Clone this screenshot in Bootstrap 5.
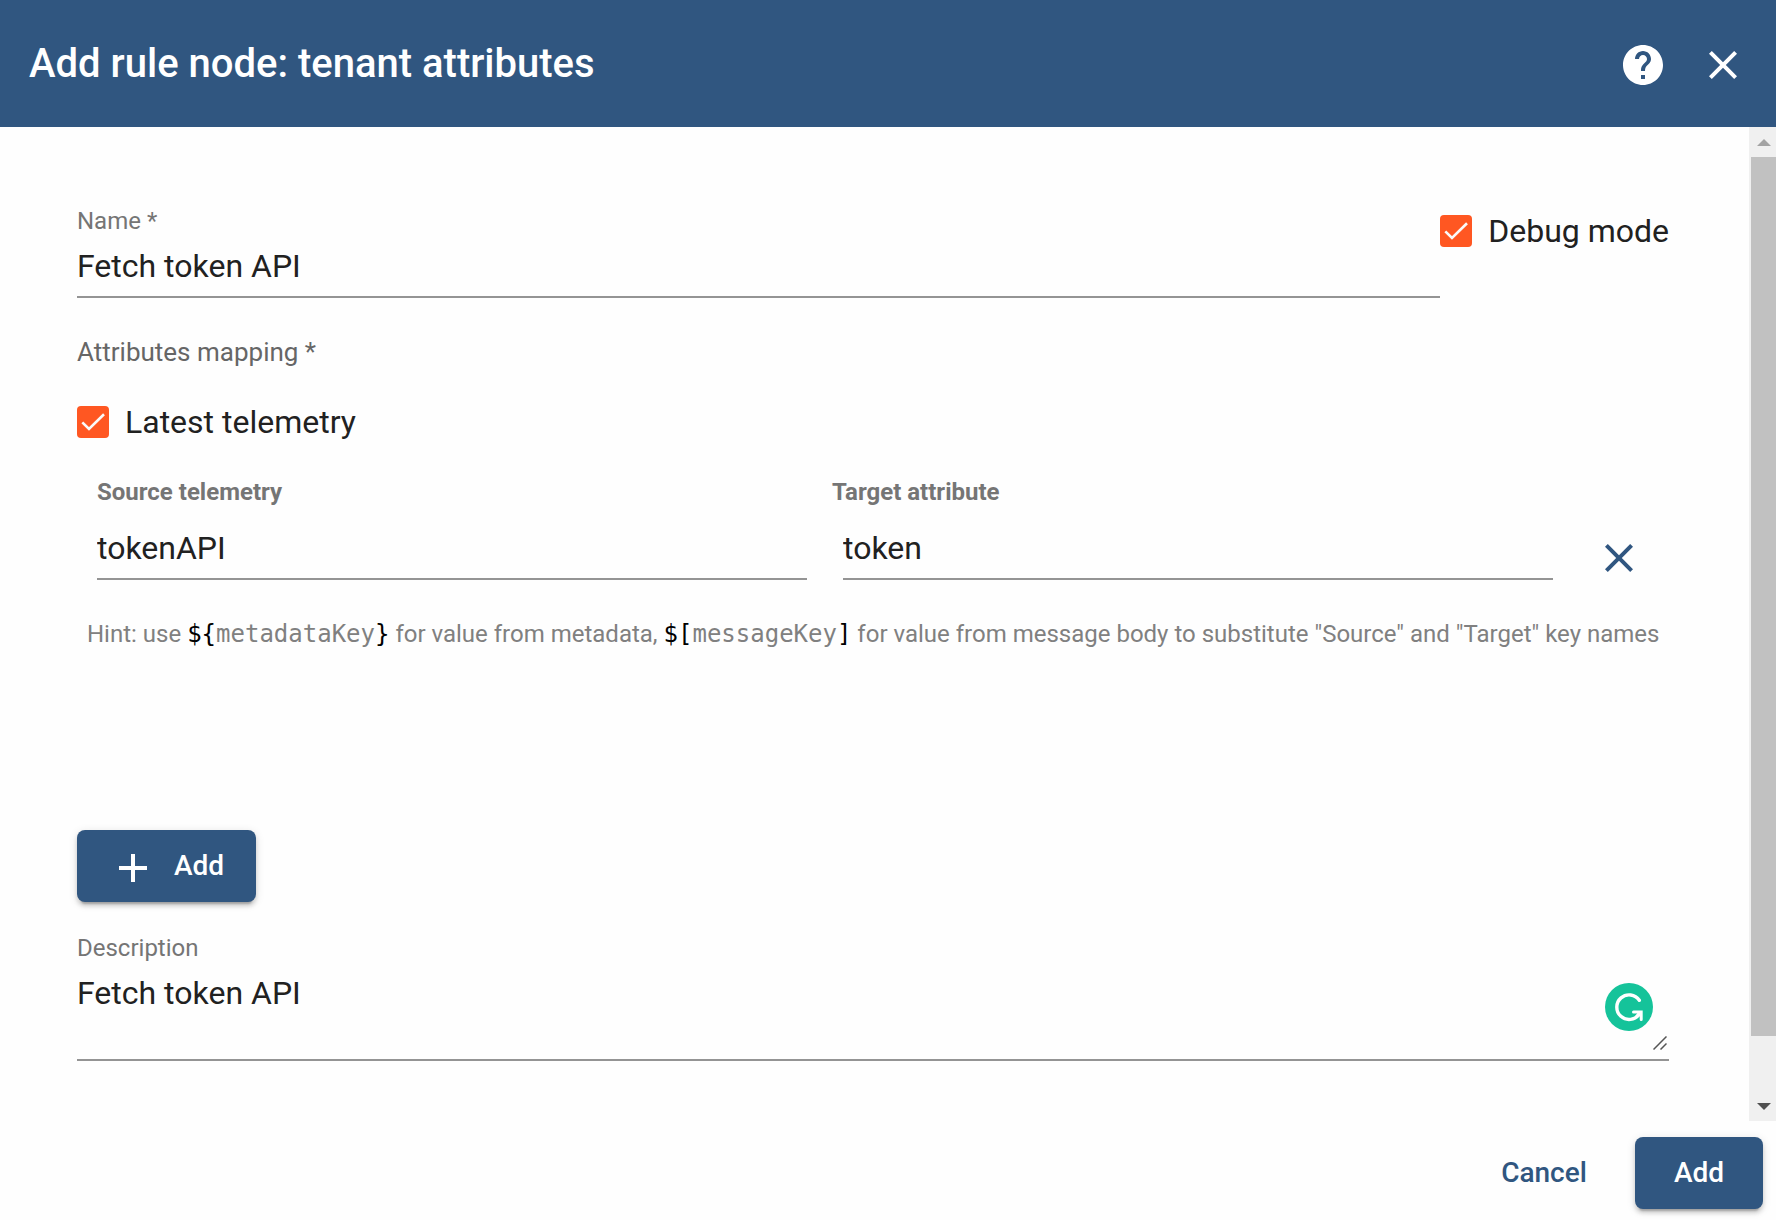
<!DOCTYPE html>
<html lang="en">
<head>
<meta charset="utf-8">
<meta name="viewport" content="width=device-width, initial-scale=1">
<title>Add rule node: tenant attributes</title>
<link href="https://cdn.jsdelivr.net/npm/bootstrap@5.3.0/dist/css/bootstrap.min.css" rel="stylesheet">
<style>
  :root { --tb-primary: #305680; --tb-accent: #ff5722; --tb-text: #212121; --tb-muted: #757575; --tb-line: #949494; }
  body { font-family: Roboto, "Liberation Sans", sans-serif; color: var(--tb-text); background: #fefefe; }

  .dlg-head { background: var(--tb-primary); min-height: 127px; padding: 0 13px 0 29px; }
  .dlg-title { font-size: 40px; line-height: 48px; font-weight: 500; }
  .icon-btn { width: 80px; height: 80px; padding: 0; border: 0; background: none; color: inherit; }
  .icon-btn.short { height: 44px; color: var(--tb-primary); }
  .head-tools { padding-top: 2px; }
  .icon-btn svg, .raised-btn svg { width: 48px; height: 48px; fill: currentColor; }
  .raised-btn svg { margin-top: 4px; }

  .dlg-form { padding: 80px 80px 60px 77px; }
  .fld-label { display: block; font-size: 24px; line-height: 28px; color: var(--tb-muted); margin-bottom: 12px; }
  .fld-input { display: block; width: 100%; border: 0; border-bottom: 2px solid var(--tb-line); border-radius: 0;
    background: none; padding: 0 0 11px; font-size: 32px; line-height: 38px; color: var(--tb-text); outline: 0; }
  textarea.fld-input { height: 87px; resize: none; overflow: hidden; }
  .debug-opt { padding-top: 8px; }
  .check-row { gap: 16px; font-size: 32px; line-height: 32px; }
  .check-row .form-check-input { width: 32px; height: 32px; margin: 0; border: 0; border-radius: 4px; flex: none; }
  .check-row .form-check-input:checked { background-color: var(--tb-accent); background-size: 32px 32px;
    background-image: url("data:image/svg+xml,%3csvg xmlns='http://www.w3.org/2000/svg' viewBox='0 0 32 32'%3e%3cpath fill='none' stroke='%23fafafa' stroke-width='2.6' d='M5.3 16.3 12 23 27 8.3'/%3e%3c/svg%3e"); }

  .map-title { font-size: 26px; line-height: 32px; color: #666; margin: 38px 0; }
  .kv-map { margin-top: 40px; padding-left: 10px; min-height: 352px; }
  .kv-head { font-size: 24px; line-height: 28px; font-weight: 700; color: var(--tb-muted); padding: 0 102px 0 10px; margin-bottom: 23px; }
  .kv-fields { gap: 36px; padding: 0 10px; }
  .kv-remove { margin-left: -10px; }
  .kv-hint { font-size: 24px; line-height: 32px; color: #808080; margin: 38px 0 0; }
  .kv-hint code { font-family: "DejaVu Sans Mono", monospace; font-size: 24px; line-height: 28px; color: #000; }
  .kv-hint code span { color: #808080; }

  .raised-btn { height: 72px; padding: 0 39px; border: 0; border-radius: 8px; font-size: 28px; font-weight: 500; color: #fff;
    background: var(--tb-primary); box-shadow: 0 6px 2px -4px rgba(0,0,0,.2), 0 4px 4px rgba(0,0,0,.14), 0 2px 10px rgba(0,0,0,.12); }
  .raised-btn.with-icon { gap: 17px; padding: 0 32px; margin-bottom: 32px; }
  .flat-btn { height: 72px; padding: 0 32px; border: 0; background: none; font-size: 28px; font-weight: 500; color: var(--tb-primary); }
  .dlg-foot { padding: 16px 13px 11px; gap: 16px; }

  .writer-badge { position: absolute; right: 16px; bottom: 30px; width: 48px; height: 48px; }
  .grip { position: absolute; right: 2px; bottom: 11px; width: 14px; height: 14px; }

  .scroll-rail { width: 27px; background: #f0f0f0; padding-left: 2px; }
  .rail-end { height: 30px; }
  .rail-end svg { width: 14px; height: 7px; display: block; }
  .rail-thumb { flex: 16 1 0; background: #c1c1c1; }
  .rail-rest { flex: 1 1 0; }
</style>
</head>
<body>
<div class="d-flex flex-column min-vh-100">
  <header class="dlg-head d-flex align-items-center justify-content-between text-white">
    <h1 class="dlg-title m-0">Add rule node: tenant attributes</h1>
    <div class="head-tools d-flex">
      <button type="button" class="icon-btn d-flex align-items-center justify-content-center" aria-label="Help">
        <svg viewBox="0 0 24 24" aria-hidden="true"><path d="M12 2C6.480 2 2 6.480 2 12s4.480 10 10 10 10-4.480 10-10S17.520 2 12 2zm1 17h-2v-2h2v2zm2.070-7.750-.9.920C13.450 12.900 13 13.500 13 15h-2v-.5c0-1.100.450-2.100 1.170-2.830l1.240-1.260c.370-.360.590-.860.590-1.410 0-1.100-.9-2-2-2s-2 .9-2 2H8c0-2.210 1.790-4 4-4s4 1.790 4 4c0 .880-.360 1.680-.930 2.250z"/></svg>
      </button>
      <button type="button" class="icon-btn d-flex align-items-center justify-content-center" aria-label="Close">
        <svg viewBox="0 0 24 24" aria-hidden="true"><path d="M19 6.410 17.590 5 12 10.590 6.410 5 5 6.410 10.590 12 5 17.590 6.410 19 12 13.410 17.590 19 19 17.590 13.410 12z"/></svg>
      </button>
    </div>
  </header>

  <div class="d-flex flex-grow-1">
    <form class="dlg-form flex-grow-1" id="node-form">
      <div class="d-flex align-items-start">
        <div class="flex-grow-1">
          <label class="fld-label" for="node-name">Name *</label>
          <input class="fld-input" id="node-name" type="text" value="Fetch token API" required>
        </div>
        <div class="debug-opt check-row d-flex align-items-center">
          <input class="form-check-input" type="checkbox" id="debug-mode" checked>
          <label for="debug-mode">Debug mode</label>
        </div>
      </div>

      <p class="map-title">Attributes mapping *</p>

      <div class="check-row d-flex align-items-center">
        <input class="form-check-input" type="checkbox" id="latest" checked>
        <label for="latest">Latest telemetry</label>
      </div>

      <div class="kv-map">
        <div class="kv-head d-flex">
          <label class="w-50" for="source-key">Source telemetry</label>
          <label class="w-50" for="target-key">Target attribute</label>
        </div>
        <div class="kv-fields d-flex align-items-end">
          <input class="fld-input" id="source-key" type="text" value="tokenAPI">
          <input class="fld-input" id="target-key" type="text" value="token">
          <button type="button" class="kv-remove icon-btn short d-flex flex-shrink-0 align-items-center justify-content-center" aria-label="Remove">
            <svg viewBox="0 0 24 24" aria-hidden="true"><path d="M19 6.410 17.590 5 12 10.590 6.410 5 5 6.410 10.590 12 5 17.590 6.410 19 12 13.410 17.590 19 19 17.590 13.410 12z"/></svg>
          </button>
        </div>
        <p class="kv-hint">Hint: use <code>${<span>metadataKey</span>}</code> for value from metadata, <code>$[<span>messageKey</span>]</code> for value from message body to substitute "Source" and "Target" key names</p>
      </div>

      <button type="button" class="raised-btn with-icon d-flex align-items-center">
        <svg viewBox="0 0 24 24" aria-hidden="true"><path d="M19 13h-6v6h-2v-6H5v-2h6V5h2v6h6v2z"/></svg>
        <span>Add</span>
      </button>

      <label class="fld-label" for="node-desc">Description</label>
      <div class="position-relative">
        <textarea class="fld-input" id="node-desc">Fetch token API</textarea>
        <svg class="writer-badge" viewBox="0 0 48 48" aria-hidden="true">
          <circle cx="24" cy="24" r="24" fill="#15c39a"/>
          <path fill="none" stroke="#fff" stroke-width="3.400" stroke-linecap="round" d="M34.300 17.300A12.300 12.300 0 1 0 34.200 31.200"/>
          <path fill="none" stroke="#fff" stroke-width="3" stroke-linecap="round" stroke-linejoin="miter" d="M28.500 29H36.200V36.500M36 29.500 32 33"/>
        </svg>
        <svg class="grip" viewBox="0 0 14 14" aria-hidden="true"><path d="M.5 13.500 13.500.5M7.500 13.500l6-6" stroke="#555" stroke-width="1.500" fill="none"/></svg>
      </div>
    </form>

    <div class="scroll-rail d-flex flex-column flex-shrink-0" aria-hidden="true">
      <div class="rail-end d-flex align-items-center justify-content-center"><svg viewBox="0 0 14 7"><path d="M0 7 7 0l7 7z" fill="#a3a3a3"/></svg></div>
      <div class="rail-thumb"></div>
      <div class="rail-rest"></div>
      <div class="rail-end d-flex align-items-center justify-content-center"><svg viewBox="0 0 14 7"><path d="M0 0h14L7 7z" fill="#505050"/></svg></div>
    </div>
  </div>

  <footer class="dlg-foot d-flex justify-content-end">
    <button type="button" class="flat-btn">Cancel</button>
    <button type="submit" form="node-form" class="raised-btn">Add</button>
  </footer>
</div>
<script src="https://cdn.jsdelivr.net/npm/bootstrap@5.3.0/dist/js/bootstrap.bundle.min.js"></script>
</body>
</html>
